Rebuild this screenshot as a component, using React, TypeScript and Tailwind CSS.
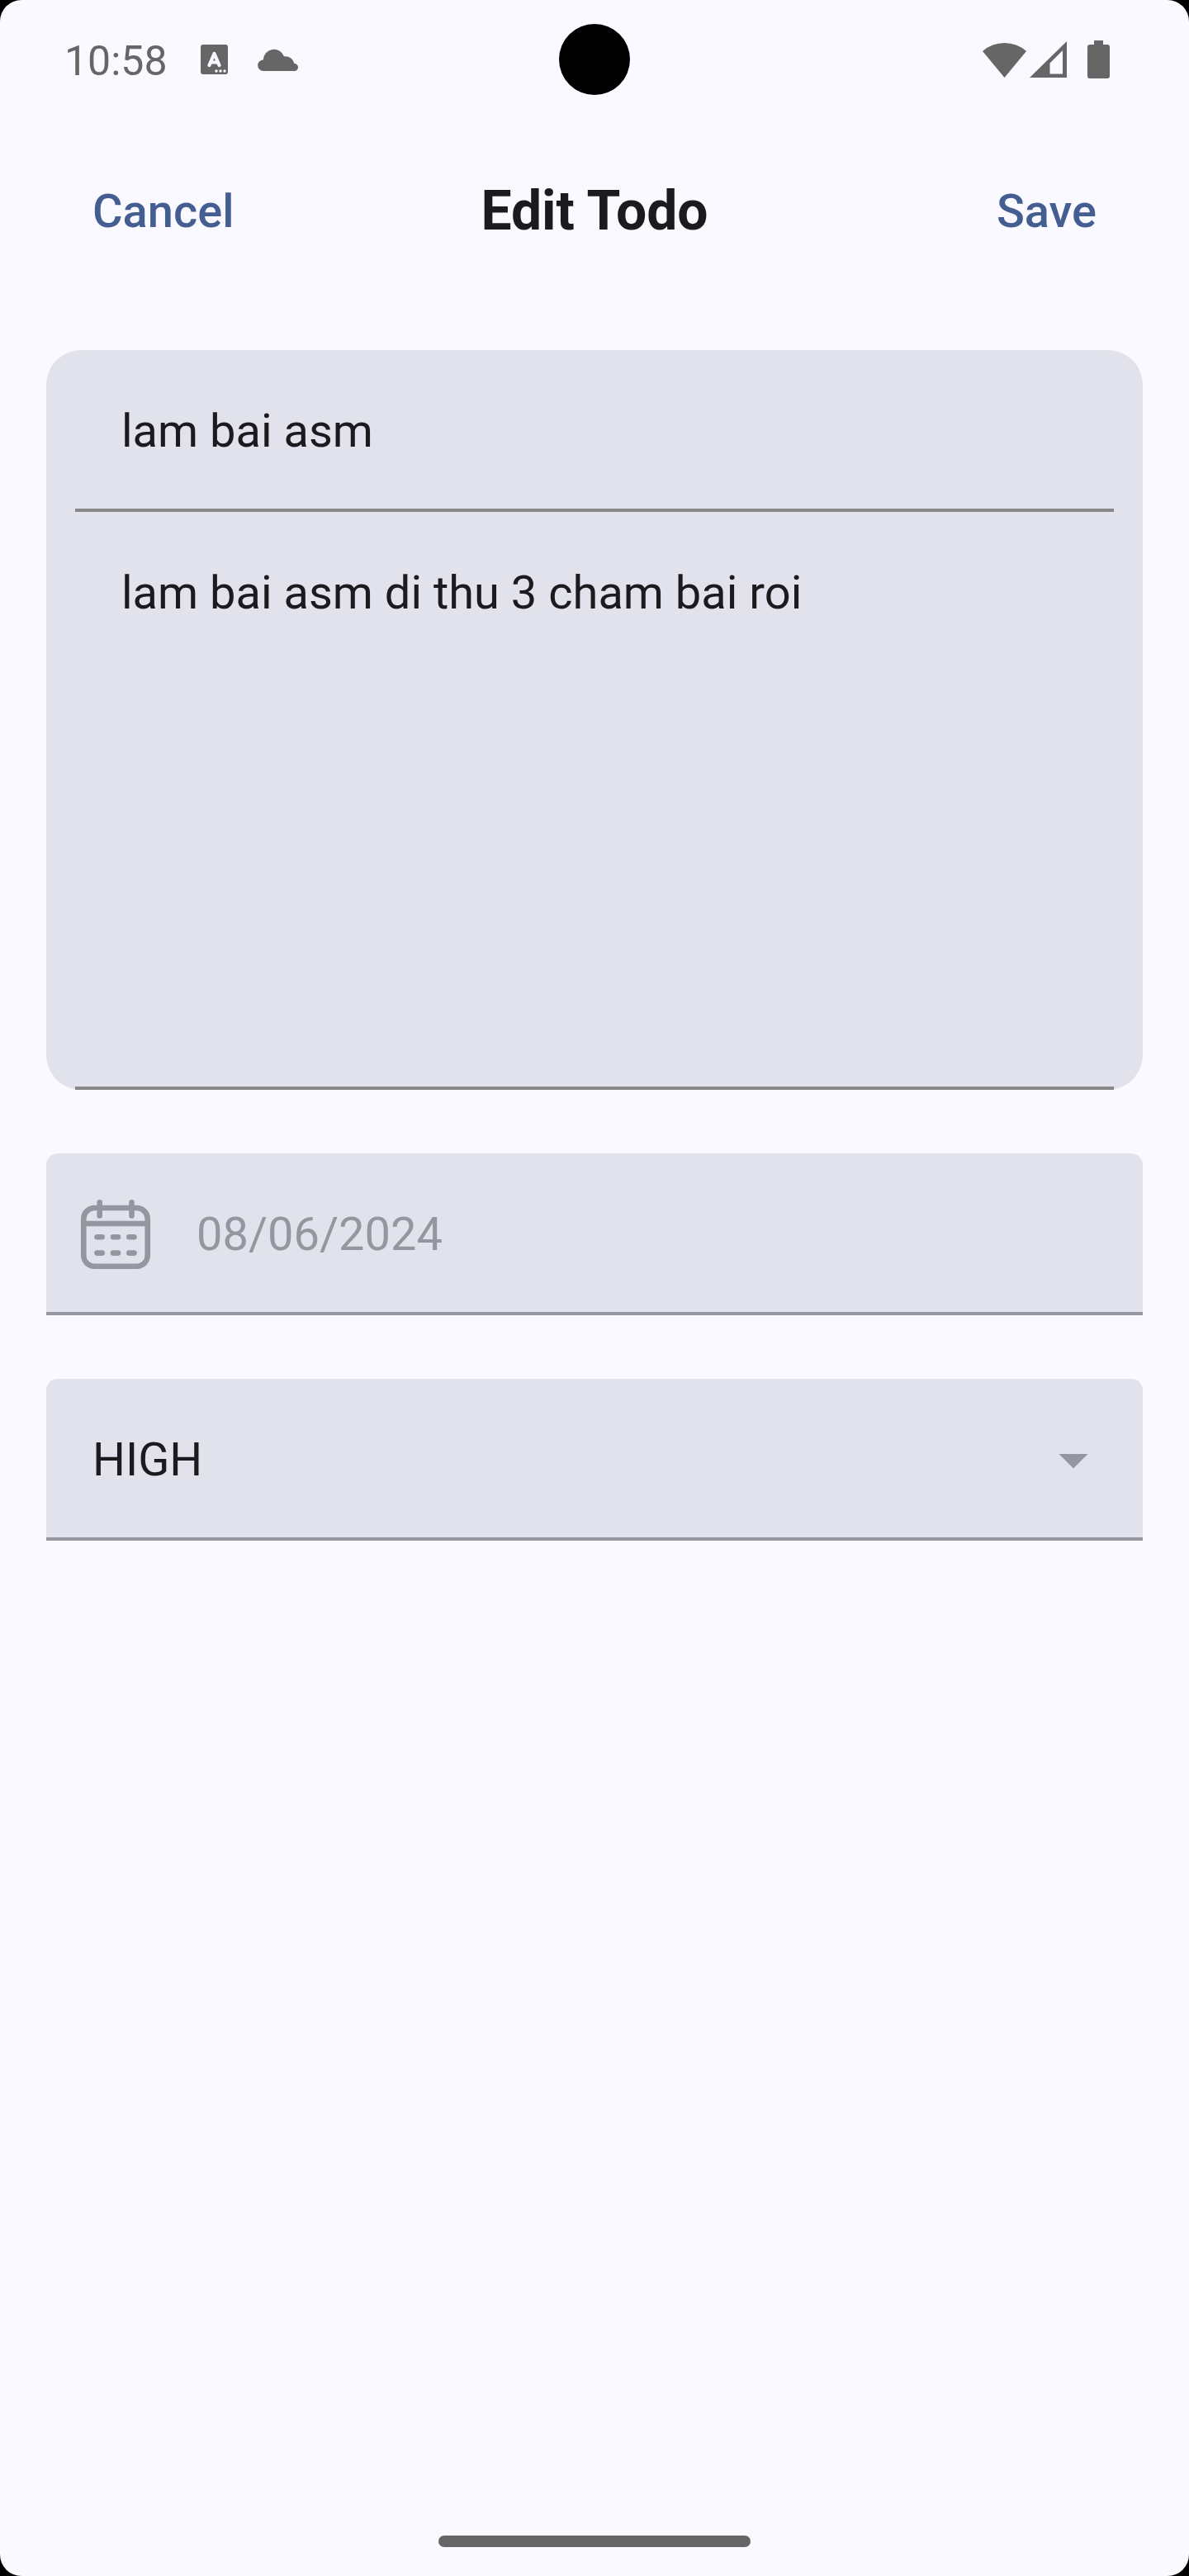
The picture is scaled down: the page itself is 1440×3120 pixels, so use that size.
import { useState } from "react";

function StatusBar() {
  return (
    <div className="relative flex h-36 items-center justify-between pr-24 pl-[78px] text-[#666666]">
      <div className="flex items-center">
        <span className="pt-1 text-[50px] leading-[56px]">10:58</span>
        <svg className="ml-10 h-9 w-[33px]" viewBox="0 0 33 36" aria-hidden="true">
          <rect width="33" height="36" rx="3" fill="currentColor" />
          <path d="M10.500 25 L16.500 11 L22.500 25 M12.500 21.500 H20.500" fill="none" stroke="#faf9ff" strokeWidth="4.200" strokeLinecap="round" strokeLinejoin="round" />
          <circle cx="19" cy="32" r="1.700" fill="#faf9ff" />
          <circle cx="24" cy="32" r="1.700" fill="#faf9ff" />
          <circle cx="29" cy="32" r="1.700" fill="#faf9ff" />
        </svg>
        <svg className="ml-9 h-[27px] w-[49px]" viewBox="0 0 49 27" aria-hidden="true">
          <path d="M7 27 A6.700 6.700 0 0 1 6.800 13.500 A13 13 0 0 1 32 9.300 A11 11 0 0 1 44.500 18 A4.500 4.500 0 0 1 44.500 27 Z" fill="currentColor" />
        </svg>
      </div>
      <div className="absolute top-[29px] left-1/2 size-[86px] -translate-x-1/2 rounded-full bg-black" />
      <div className="flex items-center">
        <svg className="h-11 w-[53px]" viewBox="0 0 53 44" aria-hidden="true">
          <path d="M0 12 A40 40 0 0 1 53 12 L26.500 44 Z" fill="currentColor" />
        </svg>
        <svg className="ml-1 h-11 w-[45px]" viewBox="0 0 45 44" aria-hidden="true">
          <path fillRule="evenodd" d="M0 44 L45 0 V44 Z M24.500 26.500 V39.500 H40 V11 Z" fill="currentColor" />
        </svg>
        <svg className="ml-[25px] h-[46px] w-[27px]" viewBox="0 0 27 46" aria-hidden="true">
          <path d="M8 0 H19 V5 H24 A3 3 0 0 1 27 8 V43 A3 3 0 0 1 24 46 H3 A3 3 0 0 1 0 43 V8 A3 3 0 0 1 3 5 H8 Z" fill="currentColor" />
        </svg>
      </div>
    </div>
  );
}

function CalendarIcon() {
  return (
    <svg className="size-[84px] shrink-0" viewBox="0 0 84 84" fill="none" stroke="currentColor" strokeWidth="6.600" strokeLinecap="round" aria-hidden="true">
      <rect x="3.300" y="10" width="77.400" height="70.700" rx="13" />
      <path d="M22.700 3.300 V19.400 M61.500 3.300 V19.400 M3.300 29 H80.700" />
      <path d="M19.500 45.300 H25.700 M39 45.300 H45 M58.300 45.300 H64.500 M19.500 64.600 H25.700 M39 64.600 H45 M58.300 64.600 H64.500" />
    </svg>
  );
}

export default function App() {
  const [title, setTitle] = useState("lam bai asm");
  const [details, setDetails] = useState("lam bai asm di thu 3 cham bai roi");
  const [priority, setPriority] = useState("HIGH");

  return (
    <div className="bg-black font-['Roboto',sans-serif] text-[#1b1b1f]">
      <div className="flex min-h-screen flex-col rounded-[26px] bg-[#faf9ff]">
        <StatusBar />
        <form className="flex flex-1 flex-col" onSubmit={(e) => e.preventDefault()}>
          <header className="grid h-56 grid-cols-[1fr_auto_1fr] items-center px-28">
            <button type="button" className="justify-self-start text-[56px] leading-[70px] font-medium text-[#445e91]">
              Cancel
            </button>
            <h1 className="text-[66px] leading-[84px] font-bold">Edit Todo</h1>
            <button type="submit" className="justify-self-end text-[56px] leading-[70px] font-medium text-[#445e91]">
              Save
            </button>
          </header>
          <main className="flex flex-col gap-[77px] px-14 pt-14">
            <div className="flex flex-col rounded-[42px] bg-[#e2e2ec] px-[35px]">
              <input
                aria-label="Title"
                value={title}
                onChange={(e) => setTitle(e.target.value)}
                className="h-49 w-full border-b-4 border-[#888888] bg-transparent px-14 pt-1 text-[56px] leading-[84px] outline-none"
              />
              <textarea
                aria-label="Description"
                value={details}
                onChange={(e) => setDetails(e.target.value)}
                className="h-175 w-full resize-none border-b-4 border-[#888888] bg-transparent px-14 pt-14 text-[56px] leading-[84px] outline-none"
              />
            </div>
            <label className="flex h-49 items-center rounded-t-[14px] border-b-4 border-[#9696a0] bg-[#e2e2ec] px-[42px] pt-1 text-[#9696a0]">
              <CalendarIcon />
              <input
                aria-label="Due date"
                disabled
                value="08/06/2024"
                className="min-w-0 flex-1 bg-transparent px-14 text-[56px] leading-[84px]"
              />
            </label>
            <div className="relative">
              <select
                aria-label="Priority"
                value={priority}
                onChange={(e) => setPriority(e.target.value)}
                className="block h-49 w-full appearance-none rounded-t-[14px] border-b-4 border-[#9696a0] bg-[#e2e2ec] px-14 pt-1 text-[56px] leading-[84px] outline-none"
              >
                <option>HIGH</option>
                <option>MEDIUM</option>
                <option>LOW</option>
              </select>
              <svg className="pointer-events-none absolute top-14 right-[42px] size-[84px] text-[#9696a0]" viewBox="0 0 24 24" aria-hidden="true">
                <path d="M7 10 L12 15 L17 10 Z" fill="currentColor" />
              </svg>
            </div>
          </main>
        </form>
        <div className="mb-[35px] h-3.5 w-[378px] self-center rounded-full bg-[#666666]" />
      </div>
    </div>
  );
}
